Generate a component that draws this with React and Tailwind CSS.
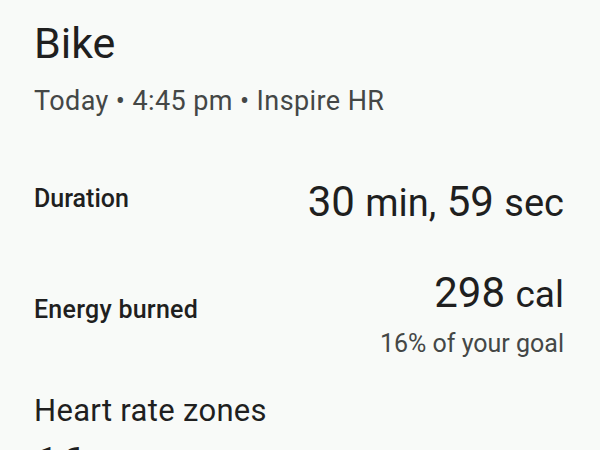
export default function App() {
  return (
    <div
      className="w-[600px] h-[450px] overflow-hidden bg-[#f8faf8] text-[#1f1f1f] pl-[34px] pr-[36px]"
      style={{ fontFamily: 'Roboto, "Open Sans", sans-serif' }}
    >
      {/* Header */}
      <h1 className="text-[43px] leading-[52px] pt-[17px]">Bike</h1>
      <p className="text-[27px] leading-[32px] tracking-[0.015em] text-[#444746] mt-[16px]">
        Today • 4:45 pm • Inspire HR
      </p>

      {/* Duration */}
      <div className="flex items-start justify-between mt-[61px]">
        <span className="text-[25px] leading-[30px] font-medium mt-[6px]">Duration</span>
        <span className="text-[42px] leading-[48px]">
          30 <span className="text-[38px]">min,</span> 59 <span className="text-[38px]">sec</span>
        </span>
      </div>

      {/* Energy */}
      <div className="flex items-start justify-between mt-[42px]">
        <span className="text-[25px] leading-[30px] font-medium tracking-[0.01em] mt-[26px]">Energy burned</span>
        <div className="flex flex-col items-end">
          <span className="text-[42px] leading-[48px]">
            298 <span className="text-[37px]">cal</span>
          </span>
          <span className="text-[25px] leading-[30px] text-[#444746] mt-[10px]">16% of your goal</span>
        </div>
      </div>

      {/* Heart rate zones */}
      <h2 className="text-[31px] leading-[36px] tracking-[0.01em] mt-[34px]">Heart rate zones</h2>
      <p className="text-[46px] leading-[52px] mt-[9px]">
        16 <span className="text-[40px]">min</span>
      </p>
    </div>
  );
}
